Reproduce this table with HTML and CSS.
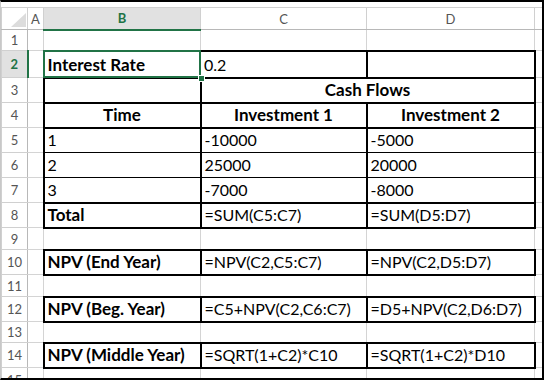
FILE: index.html
```html
<!DOCTYPE html>
<html>
<head>
<meta charset="utf-8">
<link rel="stylesheet" href="styles.css">
</head>
<body>
<div class="sheet">
  <div class="strip"></div>
  <table class="grid">
    <colgroup>
      <col class="c-rh"><col class="c-a"><col class="c-b"><col class="c-c"><col class="c-d"><col class="c-e">
    </colgroup>
    <tr class="hdr">
      <th class="corner"><svg width="26" height="21" viewBox="0 0 26 21"><polygon points="9,19 24,19 24,5" fill="#dcdcdc"/></svg></th>
      <th>A</th><th class="colsel">B</th><th>C</th><th>D</th><th></th>
    </tr>
    <tr class="h21"><th class="rn">1</th><td></td><td></td><td></td><td></td><td></td></tr>
    <tr class="h27"><th class="rn rowsel">2</th><td></td>
      <td class="bl bt bb r1 b active"><span>Interest Rate</span><i class="selbox"></i><i class="handle"></i></td>
      <td class="bt bb r1">0.2</td><td class="box"></td><td></td></tr>
    <tr class="h25"><th class="rn">3</th><td></td><td class="box"></td><td class="box b ctr" colspan="2">Cash Flows</td><td></td></tr>
    <tr class="h25"><th class="rn">4</th><td></td><td class="box b ctr">Time</td><td class="box b ctr">Investment 1</td><td class="box b ctr">Investment 2</td><td></td></tr>
    <tr class="h25"><th class="rn">5</th><td></td><td class="bl br b1">1</td><td class="bl br b1">-10000</td><td class="bl br b1">-5000</td><td></td></tr>
    <tr class="h25"><th class="rn">6</th><td></td><td class="bl br b1">2</td><td class="bl br b1">25000</td><td class="bl br b1">20000</td><td></td></tr>
    <tr class="h25"><th class="rn">7</th><td></td><td class="bl br bb">3</td><td class="bl br bb">-7000</td><td class="bl br bb">-8000</td><td></td></tr>
    <tr class="h25"><th class="rn">8</th><td></td><td class="box b">Total</td><td class="box">=SUM(C5:C7)</td><td class="box">=SUM(D5:D7)</td><td></td></tr>
    <tr class="h22"><th class="rn">9</th><td></td><td></td><td></td><td></td><td></td></tr>
    <tr class="h25"><th class="rn">10</th><td></td><td class="box b">NPV (End Year)</td><td class="box">=NPV(C2,C5:C7)</td><td class="box">=NPV(C2,D5:D7)</td><td></td></tr>
    <tr class="h22"><th class="rn">11</th><td></td><td></td><td></td><td></td><td></td></tr>
    <tr class="h25"><th class="rn">12</th><td></td><td class="box b">NPV (Beg. Year)</td><td class="box">=C5+NPV(C2,C6:C7)</td><td class="box">=D5+NPV(C2,D6:D7)</td><td></td></tr>
    <tr class="h21"><th class="rn">13</th><td></td><td></td><td></td><td></td><td></td></tr>
    <tr class="h25"><th class="rn">14</th><td></td><td class="box b">NPV (Middle Year)</td><td class="box">=SQRT(1+C2)*C10</td><td class="box">=SQRT(1+C2)*D10</td><td></td></tr>
    <tr class="h25"><th class="rn">15</th><td></td><td></td><td></td><td></td><td></td></tr>
  </table>
</div>
</body>
</html>
```
FILE: styles.css
```css
body {
  margin: 0;
  background: #fff;
}
.sheet {
  width: 544px;
  height: 380px;
  box-sizing: border-box;
  border: 2px solid #000;
  border-left: 1px solid #c8c8c8;
  overflow: hidden;
  background: #fff;
}
.strip {
  height: 5px;
}
.grid {
  border-collapse: collapse;
  table-layout: fixed;
  width: 541px;
  font-family: Lato, "Liberation Sans", sans-serif;
}
.c-rh { width: 26px; }
.c-a { width: 16px; }
.c-b { width: 157px; }
.c-c { width: 166px; }
.c-d { width: 168px; }
.c-e { width: 8px; }

.hdr { height: 22px; }
.h21 { height: 21px; }
.h22 { height: 22px; }
.h25 { height: 25px; }
.h27 { height: 27px; }

.grid th {
  font-weight: normal;
  font-size: 13px;
  color: #555;
  border: 1px solid #d0d0d0;
  padding: 0;
  vertical-align: middle;
  text-align: center;
  background: #fff;
  overflow: hidden;
  white-space: nowrap;
}
.hdr th {
  border-bottom-color: #b8b8b8;
}
.grid th.corner {
  vertical-align: top;
  line-height: 0;
}
.grid th.rn {
  border-right-color: #b8b8b8;
}
.grid th.colsel {
  background: #e1e1e1;
  color: #217346;
  font-weight: bold;
  border-bottom: 2px solid #217346;
}
.grid th.rowsel {
  background: #e1e1e1;
  color: #217346;
  font-weight: bold;
  border-right: 2px solid #217346;
}

.grid td {
  border: 1px solid #d4d4d4;
  padding: 0 0 2px 3px;
  font-size: 16px;
  line-height: 20px;
  vertical-align: bottom;
  white-space: nowrap;
  overflow: hidden;
  color: #000;
}
.grid td.b { font-weight: bold; font-size: 17px; }
.grid td.ctr { text-align: center; padding-left: 0; }
.grid td.box { border: 2px solid #000; }
.grid td.bl { border-left: 2px solid #000; }
.grid td.br { border-right: 2px solid #000; }
.grid td.bt { border-top: 2px solid #000; }
.grid td.bb { border-bottom: 2px solid #000; }
.grid td.r1 { border-right: 1px solid #000; }
.grid td.b1 { border-bottom: 1px solid #000; }

.grid td.active {
  position: relative;
  overflow: visible;
}
.selbox {
  position: absolute;
  left: -2px;
  top: -2px;
  right: -1px;
  bottom: -1px;
  border: 2px solid #217346;
  pointer-events: none;
}
.handle {
  position: absolute;
  right: -5px;
  bottom: -5px;
  width: 5px;
  height: 5px;
  background: #217346;
  border: 1px solid #fff;
  z-index: 2;
}
```
